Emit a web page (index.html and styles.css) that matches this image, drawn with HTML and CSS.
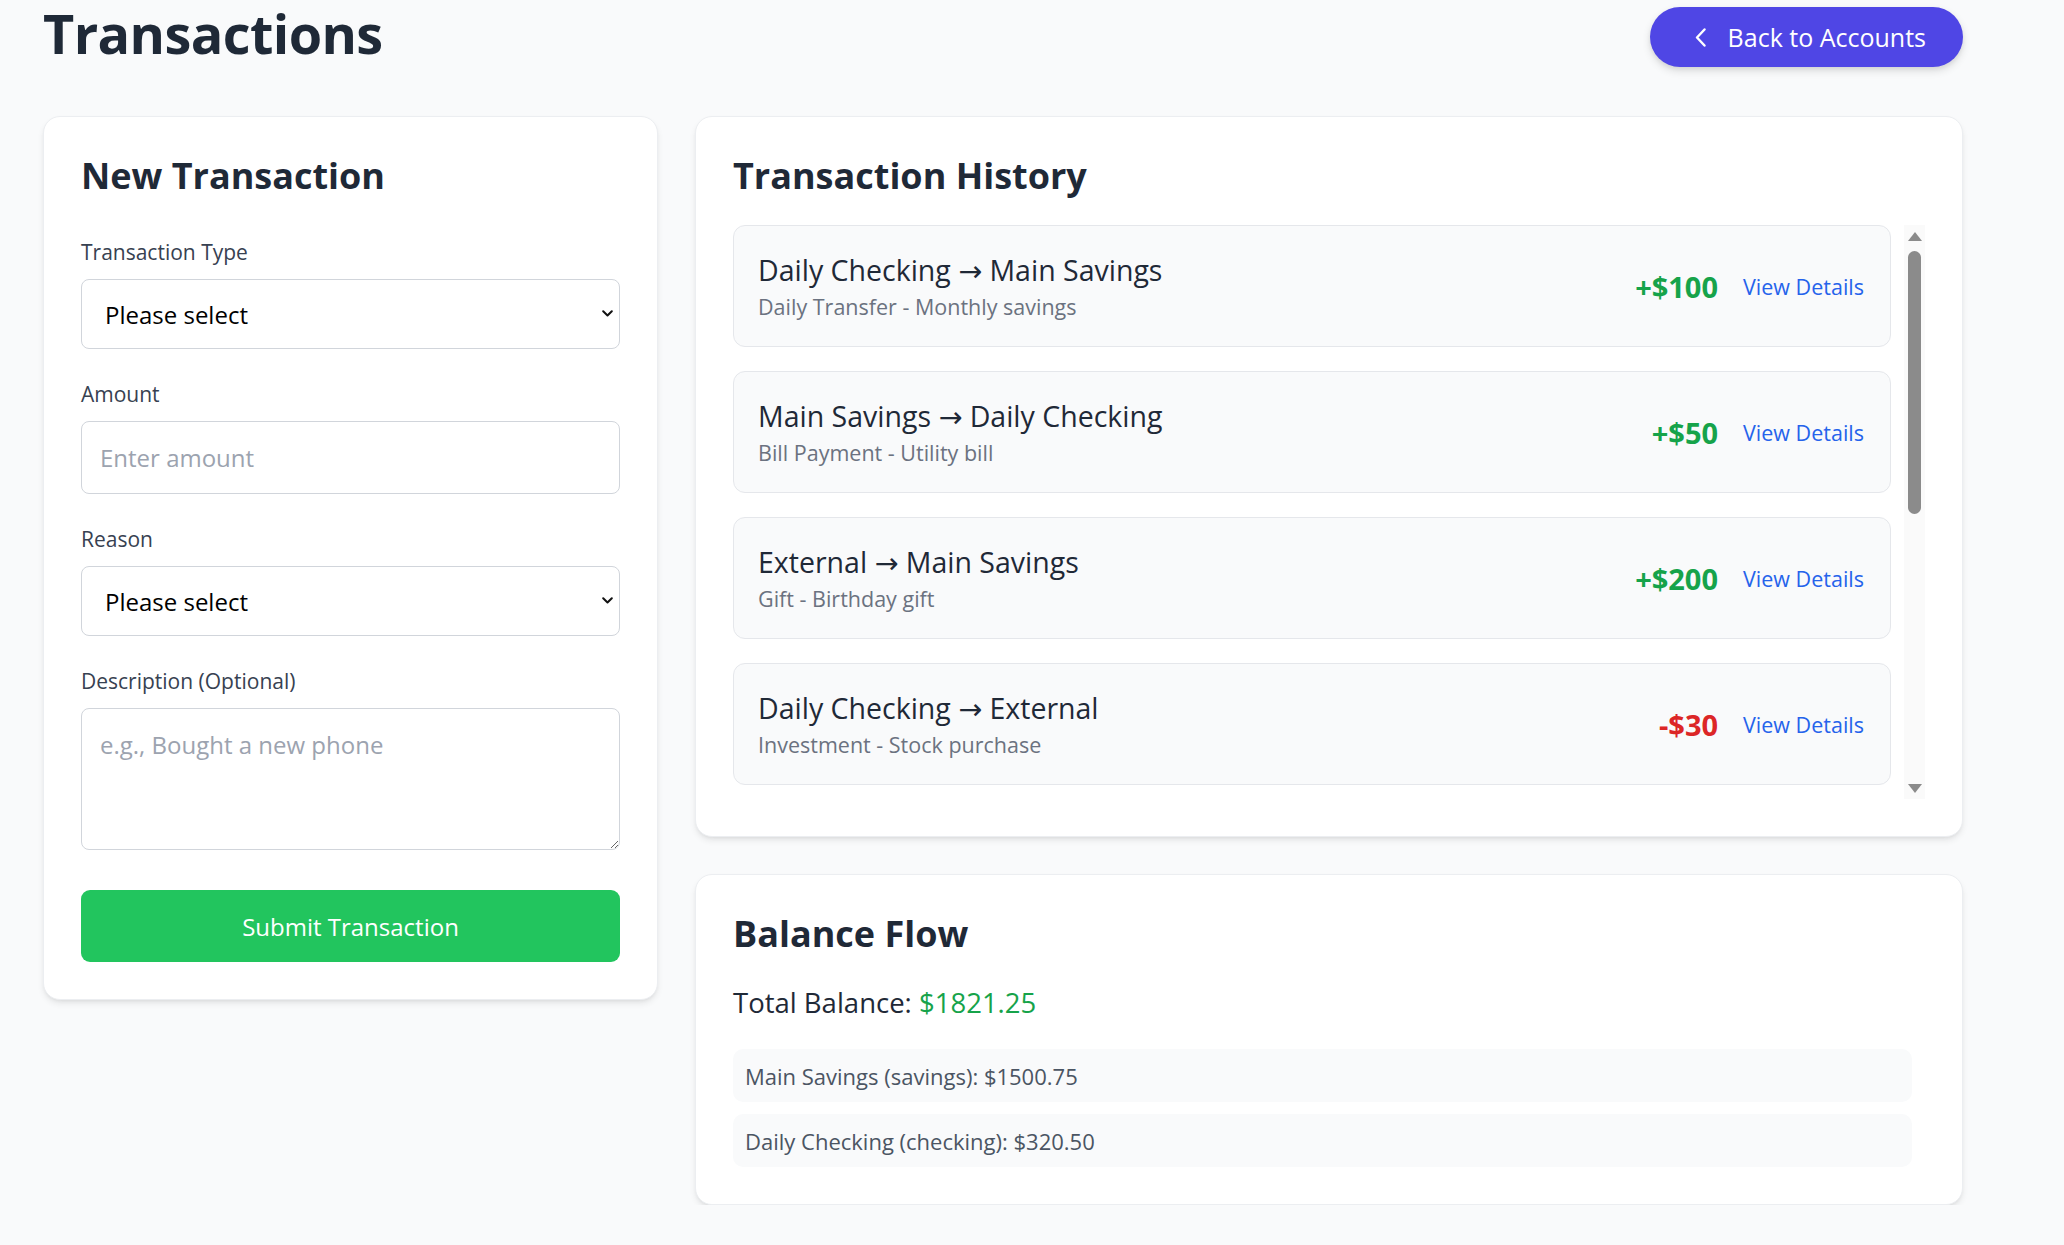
FILE: index.html
```html
<!DOCTYPE html>
<html lang="en">
<head>
<meta charset="utf-8">
<title>Transactions</title>
<link rel="stylesheet" href="styles.css">
</head>
<body>
<div class="page">
  <header class="topbar">
    <h1 class="page-title">Transactions</h1>
    <button class="back-btn" type="button">
      <svg class="back-icon" width="11" height="19" viewBox="0 0 11 19" fill="none"><path d="M9.5 1.5 L2 9.5 L9.5 17.5" stroke="#ffffff" stroke-width="2.4" stroke-linecap="round" stroke-linejoin="round"/></svg>
      <span>Back to Accounts</span>
    </button>
  </header>

  <main class="layout">
    <section class="card form-card">
      <h2 class="card-title">New Transaction</h2>
      <form class="tx-form">
        <div class="field">
          <label class="field-label">Transaction Type</label>
          <div class="select-wrap">
            <select class="control select"><option>Please select</option></select>
            <svg class="select-chevron" width="11" height="7" viewBox="0 0 11 7" fill="none"><path d="M1.2 1.2 L5.5 5.5 L9.8 1.2" stroke="#111111" stroke-width="2" stroke-linecap="round" stroke-linejoin="round"/></svg>
          </div>
        </div>
        <div class="field">
          <label class="field-label">Amount</label>
          <input class="control input" type="text" placeholder="Enter amount">
        </div>
        <div class="field">
          <label class="field-label">Reason</label>
          <div class="select-wrap">
            <select class="control select"><option>Please select</option></select>
            <svg class="select-chevron" width="11" height="7" viewBox="0 0 11 7" fill="none"><path d="M1.2 1.2 L5.5 5.5 L9.8 1.2" stroke="#111111" stroke-width="2" stroke-linecap="round" stroke-linejoin="round"/></svg>
          </div>
        </div>
        <div class="field">
          <label class="field-label">Description (Optional)</label>
          <textarea class="control textarea" placeholder="e.g., Bought a new phone"></textarea>
        </div>
        <button class="submit-btn" type="button">Submit Transaction</button>
      </form>
    </section>

    <div class="right-col">
      <section class="card history-card">
        <h2 class="card-title">Transaction History</h2>
        <div class="history-body">
          <div class="history-list">
            <div class="tx-item">
              <div class="tx-info">
                <div class="tx-route">Daily Checking → Main Savings</div>
                <div class="tx-meta">Daily Transfer - Monthly savings</div>
              </div>
              <div class="tx-side"><span class="tx-amount pos">+$100</span><a class="tx-link">View Details</a></div>
            </div>
            <div class="tx-item">
              <div class="tx-info">
                <div class="tx-route">Main Savings → Daily Checking</div>
                <div class="tx-meta">Bill Payment - Utility bill</div>
              </div>
              <div class="tx-side"><span class="tx-amount pos">+$50</span><a class="tx-link">View Details</a></div>
            </div>
            <div class="tx-item">
              <div class="tx-info">
                <div class="tx-route">External → Main Savings</div>
                <div class="tx-meta">Gift - Birthday gift</div>
              </div>
              <div class="tx-side"><span class="tx-amount pos">+$200</span><a class="tx-link">View Details</a></div>
            </div>
            <div class="tx-item">
              <div class="tx-info">
                <div class="tx-route">Daily Checking → External</div>
                <div class="tx-meta">Investment - Stock purchase</div>
              </div>
              <div class="tx-side"><span class="tx-amount neg">-$30</span><a class="tx-link">View Details</a></div>
            </div>
          </div>
          <div class="scrollbar" aria-hidden="true">
            <span class="scroll-arrow up"></span>
            <div class="scroll-track"><div class="scroll-thumb"></div></div>
            <span class="scroll-arrow down"></span>
          </div>
        </div>
      </section>

      <section class="card balance-card">
        <h2 class="card-title">Balance Flow</h2>
        <p class="total-line">Total Balance: <span class="total-amount">$1821.25</span></p>
        <div class="balance-rows">
          <div class="balance-row">Main Savings (savings): $1500.75</div>
          <div class="balance-row">Daily Checking (checking): $320.50</div>
        </div>
      </section>
    </div>
  </main>
</div>
</body>
</html>
```

FILE: styles.css
```css
* { box-sizing: border-box; }

html, body {
  margin: 0;
  background: #f9fafb;
  font-family: "Open Sans", "Noto Sans", "DejaVu Sans", sans-serif;
  color: #1f2937;
}

.page {
  width: 1963px;
  padding-left: 43px;
}

/* Header */
.topbar {
  display: flex;
  justify-content: space-between;
  align-items: flex-start;
  height: 68px;
}

.page-title {
  margin: 0;
  font-size: 54px;
  line-height: 66px;
  font-weight: 700;
  letter-spacing: -0.6px;
  color: #1f2937;
}

.back-btn {
  margin-top: 7px;
  height: 60px;
  display: flex;
  align-items: center;
  gap: 22px;
  padding: 0 37px 0 45px;
  border: none;
  border-radius: 30px;
  background: #4f46e5;
  color: #ffffff;
  font-family: inherit;
  font-size: 25px;
  box-shadow: 0 4px 8px rgba(0, 0, 0, 0.12), 0 2px 4px rgba(0, 0, 0, 0.06);
}

.back-icon { display: block; flex: none; }

/* Layout */
.layout {
  margin-top: 48px;
  display: grid;
  grid-template-columns: 615px 1268px;
  column-gap: 37px;
  align-items: start;
}

.right-col {
  display: flex;
  flex-direction: column;
  gap: 37px;
}

.card {
  background: #ffffff;
  border: 1px solid #eceef1;
  border-radius: 17px;
  padding: 37px;
  box-shadow: 0 4px 7px -1px rgba(0, 0, 0, 0.09), 0 2px 4px -2px rgba(0, 0, 0, 0.08);
}

.card-title {
  margin: 0;
  font-size: 36px;
  line-height: 44px;
  font-weight: 700;
  color: #1f2937;
}

/* Form */
.form-card .card-title { margin-bottom: 39px; }

.tx-form {
  display: flex;
  flex-direction: column;
  gap: 30px;
}

.field {
  display: flex;
  flex-direction: column;
}

.field-label {
  font-size: 21px;
  line-height: 30px;
  color: #374151;
  margin-bottom: 12px;
}

.control {
  width: 100%;
  border: 1px solid #d1d5db;
  border-radius: 8px;
  background: #ffffff;
  font-family: inherit;
  font-size: 24px;
  color: #000000;
  outline: none;
}

.control::placeholder { color: #9ca3af; }

.select-wrap { position: relative; }

.select {
  -webkit-appearance: none;
  appearance: none;
  height: 70px;
  padding: 0 40px 0 23px;
}

.select-chevron {
  position: absolute;
  right: 7px;
  top: 31px;
  pointer-events: none;
}

.input {
  height: 73px;
  padding: 0 18px;
}

.textarea {
  display: block;
  height: 142px;
  padding: 18px;
  line-height: 36px;
  resize: vertical;
}

.submit-btn {
  margin-top: 10px;
  height: 72px;
  border: none;
  border-radius: 9px;
  background: #22c55e;
  color: #ffffff;
  font-family: inherit;
  font-size: 24px;
  font-weight: 500;
}

/* History */
.history-card .card-title { margin-bottom: 27px; }

.history-body {
  display: flex;
  height: 574px;
}

.history-list {
  flex: 1;
  min-width: 0;
  overflow: hidden;
  padding-right: 13px;
  display: flex;
  flex-direction: column;
  gap: 24px;
}

.scrollbar {
  flex: none;
  width: 21px;
  display: flex;
  flex-direction: column;
  align-items: center;
  background: #fafafa;
}

.scroll-arrow {
  flex: none;
  height: 22px;
  width: 100%;
  display: flex;
  justify-content: center;
}

.scroll-arrow.up::before,
.scroll-arrow.down::before {
  content: "";
  width: 0;
  height: 0;
  border-left: 7px solid transparent;
  border-right: 7px solid transparent;
}

.scroll-arrow.up { align-items: flex-start; padding-top: 7px; }
.scroll-arrow.up::before { border-bottom: 9px solid #8b8b8b; }

.scroll-arrow.down { align-items: flex-start; padding-top: 7px; }
.scroll-arrow.down::before { border-top: 9px solid #8b8b8b; }

.scroll-track {
  flex: 1;
  width: 100%;
  padding: 4px 4px;
}

.scroll-thumb {
  height: 263px;
  border-radius: 7px;
  background: #8b8b8b;
}

.tx-item {
  flex: none;
  display: flex;
  justify-content: space-between;
  align-items: center;
  padding: 25px 26px 25px 24px;
  background: #f9fafb;
  border: 1px solid #e5e7eb;
  border-radius: 12px;
}

.tx-route {
  font-size: 28.5px;
  line-height: 38px;
  color: #1f2937;
}

.tx-meta {
  margin-top: 3px;
  font-size: 21.5px;
  line-height: 29px;
  color: #6b7280;
}

.tx-side {
  display: flex;
  align-items: center;
  gap: 25px;
}

.tx-amount {
  font-size: 29px;
  font-weight: 700;
}

.tx-amount.pos { color: #16a34a; }
.tx-amount.neg { color: #dc2626; }

.tx-link {
  font-size: 21.5px;
  color: #2563eb;
  cursor: pointer;
}

/* Balance */
.balance-card .card-title { margin-bottom: 28px; }

.total-line {
  margin: 0 0 27px;
  font-size: 27.5px;
  line-height: 38px;
  color: #1f2937;
}

.total-amount { color: #16a34a; }

.balance-rows {
  display: flex;
  flex-direction: column;
  gap: 12px;
  margin-right: 13px;
}

.balance-row {
  height: 53px;
  display: flex;
  align-items: center;
  padding: 0 12px;
  background: #f9fafb;
  border-radius: 10px;
  font-size: 22px;
  color: #4b5563;
}
```
